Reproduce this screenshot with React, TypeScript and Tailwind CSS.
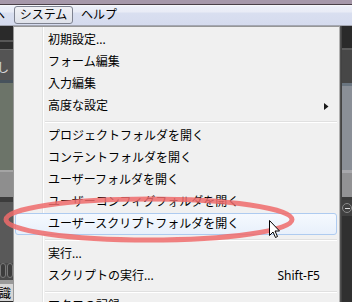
import clsx from 'clsx';

type Entry =
  | { type: 'item'; label: string; shortcut?: string; submenu?: boolean; active?: boolean }
  | { type: 'sep' };

const entries: Entry[] = [
  { type: 'item', label: '初期設定...' },
  { type: 'item', label: 'フォーム編集' },
  { type: 'item', label: '入力編集' },
  { type: 'item', label: '高度な設定', submenu: true },
  { type: 'sep' },
  { type: 'item', label: 'プロジェクトフォルダを開く' },
  { type: 'item', label: 'コンテントフォルダを開く' },
  { type: 'item', label: 'ユーザーフォルダを開く' },
  { type: 'item', label: 'ユーザーコンフィグフォルダを開く' },
  { type: 'item', label: 'ユーザースクリプトフォルダを開く', active: true },
  { type: 'sep' },
  { type: 'item', label: '実行...' },
  { type: 'item', label: 'スクリプトの実行...', shortcut: 'Shift-F5' },
  { type: 'sep' },
  { type: 'item', label: 'マクロの記録' },
];

const MenuItem = ({
  label,
  shortcut,
  submenu,
  active,
}: {
  label: string;
  shortcut?: string;
  submenu?: boolean;
  active?: boolean;
}) => (
  <div
    className={clsx(
      'ml-[1px] mr-[2px] flex h-[22px] shrink-0 items-center rounded-[3px] border pl-[32px] leading-[14px]',
      active
        ? 'border-[#aecbf0] bg-[linear-gradient(to_bottom,#f5f9fe,#e8f0fb)]'
        : 'border-transparent',
    )}
  >
    <span className="whitespace-nowrap">{label}</span>
    {shortcut && <span className="ml-auto mr-[16px]">{shortcut}</span>}
    {submenu && (
      <svg className="ml-auto mr-[7px]" width="5" height="7" viewBox="0 0 5 7">
        <path d="M0 0L4.5 3.5L0 7Z" fill="#1a1a1a" />
      </svg>
    )}
  </div>
);

const Separator = () => (
  <div className="h-[8px] shrink-0 pt-[4px]">
    <div className="ml-[31px] mr-[2px] h-[2px] border-t border-b border-t-[#e0e0e0] border-b-white" />
  </div>
);

const App = () => {
  return (
    <div className="relative flex h-[302px] w-[352px] flex-col overflow-hidden bg-[#2b2b2b] font-['Noto_Sans','Noto_Sans_CJK_JP',sans-serif] text-[12px] text-black">
      {/* window title strip */}
      <div className="h-[4px] shrink-0 bg-[#a698aa]" />
      <div className="h-[1px] shrink-0 bg-[#4a4048]" />

      {/* menu bar */}
      <div className="flex h-[21px] shrink-0 items-center border-b border-[#a4a7b2] bg-[linear-gradient(to_bottom,#f9fafd_0px,#ebeef8_2px,#e9ecf6_7px,#d9dff0_8px,#d5dbee_100%)] leading-[14px]">
        <span className="ml-[-7px] w-[12px]">ヘ</span>
        <div className="ml-[9px] flex h-[18px] w-[59px] items-center justify-center rounded-[3px] border border-[#7e8290] bg-[linear-gradient(to_bottom,#f0f1f5,#dfe2ea)]">
          システム
        </div>
        <span className="ml-[8px]">ヘルプ</span>
      </div>

      <div className="flex min-h-0 flex-1">
        {/* left backdrop */}
        <div className="flex w-[13px] shrink-0 flex-col overflow-hidden">
          <div className="h-[14px] bg-[#2a2a2a]" />
          <div className="h-[2px] bg-[#575757]" />
          <div className="h-[7px] bg-[#2e2e2e]" />
          <div className="h-[1px] bg-[#6a6a6a]" />
          <div className="flex h-[30px] items-center bg-[#545454] pt-[6px] leading-[14px] text-[#d8d8d8]">
            <span className="ml-[-3px]">し</span>
          </div>
          <div className="h-[3px] bg-[#46525c]" />
          <div className="h-[87px] bg-[#6c7469]" />
          <div className="h-[2px] bg-[#a4a4a4]" />
          <div className="h-[25px] bg-[#8e8e8e]" />
          <div className="h-[5px] bg-[#3c3c3c]" />
          <div className="h-[61px] bg-[#595959]" />
          <div className="flex h-[17px] gap-[1px] bg-[#4a4a4a]">
            <div className="h-[15px] w-[6px] rounded-full border border-[#7a7a7a] bg-[#3c3c3c]" />
            <div className="h-[15px] w-[6px] rounded-full border border-[#7a7a7a] bg-[#3c3c3c]" />
          </div>
          <div className="h-[4px] bg-[#9a9a9a]" />
          <div className="flex h-[17px] items-end bg-[#d6d6d6] leading-[14px]">
            <span className="ml-[-1px]">識</span>
          </div>
        </div>

        {/* dropdown menu */}
        <div className="flex w-[327px] shrink-0 flex-col border-l border-t border-r border-[#979797] border-r-[#b0b0b0] bg-[linear-gradient(to_right,#f0f0f0_28px,#e2e3e3_28px,#e2e3e3_29px,#ffffff_29px,#ffffff_30px,#f0f0f0_30px)] pt-[2px]">
          {entries.map((entry, i) =>
            entry.type === 'sep' ? (
              <Separator key={i} />
            ) : (
              <MenuItem
                key={i}
                label={entry.label}
                shortcut={entry.shortcut}
                submenu={entry.submenu}
                active={entry.active}
              />
            ),
          )}
        </div>

        {/* menu shadow */}
        <div className="w-[2px] shrink-0 bg-[linear-gradient(to_right,#5a5a5a,#3a3a3a)]" />

        {/* right backdrop */}
        <div className="flex w-[10px] shrink-0 flex-col overflow-hidden">
          <div className="h-[22px] bg-[#2a2a2a]" />
          <div className="h-[2px] bg-[#5c5c5c]" />
          <div className="h-[33px] bg-[#474747]" />
          <div className="h-[3px] bg-[#6a7580]" />
          <div className="h-[84px] bg-[#8a8f97]" />
          <div className="h-[3px] bg-[#a8a8ac]" />
          <div className="h-[24px] bg-[#929294]" />
          <div className="h-[3px] bg-[#3a3a3a]" />
          <div className="flex h-[16px] items-center bg-[#404040]">
            <div className="flex h-[10px] w-[14px] items-center rounded-full border border-[#8a8a8a] pl-[2px]">
              <div className="h-[1px] w-[5px] bg-[#dcdcdc]" />
            </div>
          </div>
          <div className="flex-1 bg-[#303030]" />
        </div>
      </div>

      {/* red highlight ellipse */}
      <svg className="pointer-events-none absolute left-0 top-0" width="352" height="302" viewBox="0 0 352 302">
        <ellipse cx="149" cy="219.5" rx="143" ry="20.5" fill="none" stroke="#ef6b6b" strokeWidth="5" opacity="0.85" />
      </svg>

      {/* mouse cursor */}
      <svg className="pointer-events-none absolute left-[268px] top-[219px]" width="13" height="20" viewBox="0 0 13 20">
        <path
          d="M1.5 1.5V16.5L5 13L7.5 18.5L9.5 17.5L7 12H11.5Z"
          fill="#fff"
          stroke="#000"
          strokeWidth="1"
          strokeLinejoin="miter"
        />
      </svg>
    </div>
  );
};

export default App;
